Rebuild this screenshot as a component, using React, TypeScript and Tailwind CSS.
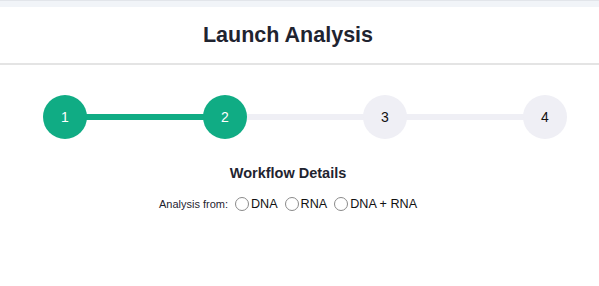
const steps = [
  { n: 1, done: true },
  { n: 2, done: true },
  { n: 3, done: false },
  { n: 4, done: false },
];

const options = ["DNA", "RNA", "DNA + RNA"];

export default function App() {
  return (
    <div className="min-h-screen bg-white font-['Liberation_Sans',Arial,sans-serif] text-[#1f2430]">
      {/* top strip */}
      <div className="h-[7px] bg-[#f1f4f8] border-t border-[#e2e5ea]" />

      {/* header */}
      <div className="h-[58px] flex items-center justify-center pr-[23px] border-b-2 border-[#e4e4e4]">
        <h1 className="text-[21.5px] font-bold text-[#1f2430]">Launch Analysis</h1>
      </div>

      {/* stepper */}
      <div className="relative mt-[30px] ml-[43px] w-[524px] h-[44px] flex items-center justify-between">
        <div className="absolute left-[22px] right-[22px] top-[19px] h-[6px] bg-[#efeff5]" />
        <div className="absolute left-[22px] w-[160px] top-[19px] h-[6px] bg-[#10ac84]" />
        {steps.map((s) => (
          <div
            key={s.n}
            className={
              s.done
                ? "relative z-10 w-[44px] h-[44px] rounded-full bg-[#10ac84] text-white flex items-center justify-center text-[14px]"
                : "relative z-10 w-[44px] h-[44px] rounded-full bg-[#efeff5] text-[#111] flex items-center justify-center text-[14px]"
            }
          >
            {s.n}
          </div>
        ))}
      </div>

      {/* workflow details */}
      <div className="mt-[25px] flex flex-col items-center pr-[23px]">
        <h2 className="text-[14.5px] font-bold text-[#1f2430] leading-[18px]">Workflow Details</h2>
        <div className="mt-[13px] flex items-center">
          <span className="text-[11px] text-[#1f2430] mr-[7px]">Analysis from:</span>
          {options.map((o) => (
            <label key={o} className="flex items-center mr-[7px] last:mr-0 text-[12.6px] text-[#111]">
              <span className="w-[14px] h-[14px] rounded-full border border-[#8a8a8a] bg-white mr-[2px]" />
              {o}
            </label>
          ))}
        </div>
      </div>
    </div>
  );
}
